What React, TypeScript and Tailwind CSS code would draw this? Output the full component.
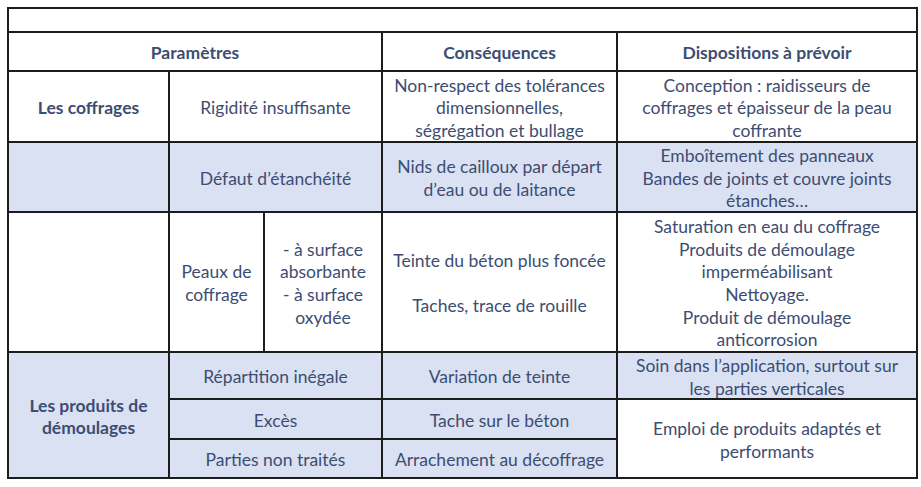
import React from "react";

const blue = "bg-[#d9e1f2]";

function Lines({ lines }: { lines: string[] }) {
  return (
    <div className="translate-y-[2px]">
      {lines.map((l, i) => (
        <div key={i} className="min-h-[22.6px]">
          {l}
        </div>
      ))}
    </div>
  );
}

export default function App() {
  const cell = "border-2 border-[#1c1c1c] text-center align-middle p-0 leading-[22.6px]";
  return (
    <div className="w-[921px] h-[487px] bg-white pt-[7px] pl-[7px] font-['Lato',sans-serif] text-[17.5px] text-[#3d4d72]">
      <table className="table-fixed border-collapse w-[909px]">
        <colgroup>
          <col className="w-[161px]" />
          <col className="w-[95px]" />
          <col className="w-[118px]" />
          <col className="w-[235px]" />
          <col className="w-[300px]" />
        </colgroup>
        <tbody>
          <tr className="h-[24px]">
            <td colSpan={5} className={cell}></td>
          </tr>
          <tr className="h-[39px] font-bold">
            <td colSpan={3} className={cell}>
              <Lines lines={["Paramètres"]} />
            </td>
            <td className={cell}>
              <Lines lines={["Conséquences"]} />
            </td>
            <td className={cell}>
              <Lines lines={["Dispositions à prévoir"]} />
            </td>
          </tr>
          <tr className="h-[71px]">
            <td className={`${cell} font-bold`}>
              <Lines lines={["Les coffrages"]} />
            </td>
            <td colSpan={2} className={cell}>
              <Lines lines={["Rigidité insuffisante"]} />
            </td>
            <td className={cell}>
              <Lines lines={["Non-respect des tolérances", "dimensionnelles,", "ségrégation et bullage"]} />
            </td>
            <td className={cell}>
              <Lines lines={["Conception : raidisseurs de", "coffrages et épaisseur de la peau", "coffrante"]} />
            </td>
          </tr>
          <tr className={`h-[70px] ${blue}`}>
            <td className={cell}></td>
            <td colSpan={2} className={cell}>
              <Lines lines={["Défaut d’étanchéité"]} />
            </td>
            <td className={cell}>
              <Lines lines={["Nids de cailloux par départ", "d’eau ou de laitance"]} />
            </td>
            <td className={cell}>
              <Lines lines={["Emboîtement des panneaux", "Bandes de joints et couvre joints", "étanches…"]} />
            </td>
          </tr>
          <tr className="h-[140px]">
            <td className={cell}></td>
            <td className={cell}>
              <Lines lines={["Peaux de", "coffrage"]} />
            </td>
            <td className={cell}>
              <Lines lines={["- à surface", "absorbante", "- à surface", "oxydée"]} />
            </td>
            <td className={cell}>
              <Lines lines={["Teinte du béton plus foncée", "", "Taches, trace de rouille"]} />
            </td>
            <td className={cell}>
              <Lines
                lines={[
                  "Saturation en eau du coffrage",
                  "Produits de démoulage",
                  "imperméabilisant",
                  "Nettoyage.",
                  "Produit de démoulage",
                  "anticorrosion",
                ]}
              />
            </td>
          </tr>
          <tr className={`h-[47px] ${blue}`}>
            <td rowSpan={3} className={`${cell} font-bold`}>
              <Lines lines={["Les produits de", "démoulages"]} />
            </td>
            <td colSpan={2} className={cell}>
              <Lines lines={["Répartition inégale"]} />
            </td>
            <td className={cell}>
              <Lines lines={["Variation de teinte"]} />
            </td>
            <td className={cell}>
              <Lines lines={["Soin dans l’application, surtout sur", "les parties verticales"]} />
            </td>
          </tr>
          <tr className={`h-[40px] ${blue}`}>
            <td colSpan={2} className={cell}>
              <Lines lines={["Excès"]} />
            </td>
            <td className={cell}>
              <Lines lines={["Tache sur le béton"]} />
            </td>
            <td rowSpan={2} className={`${cell} bg-white`}>
              <Lines lines={["Emploi de produits adaptés et", "performants"]} />
            </td>
          </tr>
          <tr className={`h-[39px] ${blue}`}>
            <td colSpan={2} className={cell}>
              <Lines lines={["Parties non traités"]} />
            </td>
            <td className={cell}>
              <Lines lines={["Arrachement au décoffrage"]} />
            </td>
          </tr>
        </tbody>
      </table>
    </div>
  );
}
